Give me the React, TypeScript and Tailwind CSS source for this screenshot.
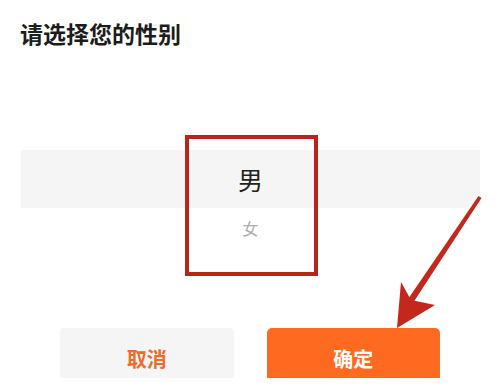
import React from "react";

export default function App() {
  const font = { fontFamily: '"Noto Sans CJK SC", "Noto Sans", sans-serif' };
  return (
    <div
      className="relative w-[500px] h-[388px] bg-white overflow-hidden"
      style={font}
    >
      <div className="pt-[18px] pl-[20px] text-[23px] leading-[30px] font-bold text-[#1c1c1c]">
        请选择您的性别
      </div>
      <div className="mt-[102px] ml-[21px] mr-[20px]">
        <div className="h-[58px] bg-[#f5f5f5] flex items-center justify-center text-[25px] leading-none text-[#222]">
          男
        </div>
        <div className="h-[40px] flex items-center justify-center text-[16px] leading-none text-[#ababab]">
          女
        </div>
      </div>
      <div className="mt-[80px] flex gap-[33px] px-[60px]">
        <div className="flex-1 h-[50px] bg-[#f5f5f5] rounded-t-[4px] flex items-center justify-center pt-[12px] text-[20px] leading-[20px] font-bold text-[#f06b2b]">
          取消
        </div>
        <div className="flex-1 h-[50px] bg-[#fe6a1f] rounded-t-[5px] flex items-center justify-center pt-[12px] text-[20px] leading-[20px] font-bold text-white">
          确定
        </div>
      </div>

      {/* annotation: red box */}
      <div className="absolute left-[185px] top-[135px] w-[133px] h-[141px] border-[4px] border-[#b8231a]" />

      {/* annotation: arrow */}
      <svg
        className="absolute left-0 top-0"
        width="500"
        height="388"
        viewBox="0 0 500 388"
      >
        <polygon
          points="478.5,196 481.5,198 411,306 406,302"
          fill="#c2281c"
        />
        <polygon
          points="397,328 401,282 411,300 435,305"
          fill="#c2281c"
        />
      </svg>
    </div>
  );
}
